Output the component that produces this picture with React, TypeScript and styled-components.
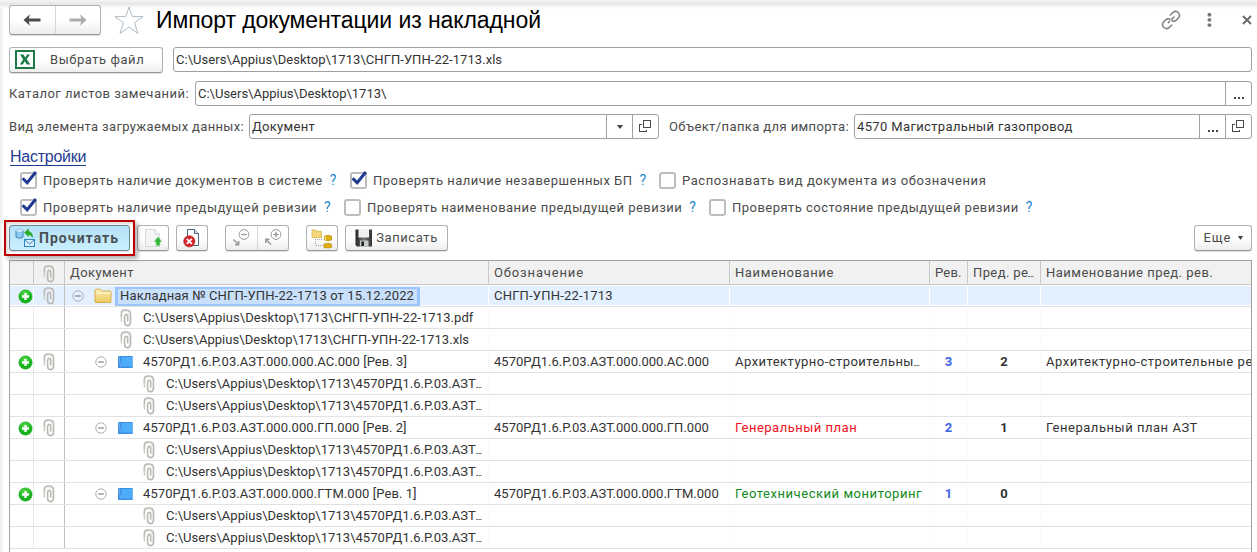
import React from 'react';
import styled, { createGlobalStyle, css } from 'styled-components';

const GlobalStyle = createGlobalStyle`
  *, *::before, *::after { box-sizing: border-box; }
  body { margin: 0; overflow: hidden; background: #fff; }
  button { font: inherit; color: inherit; }
`;

const Page = styled.div`
  position: relative;
  display: flex;
  flex-direction: column;
  width: 1257px;
  height: 552px;
  padding: 5px 5px 0 9px;
  overflow: hidden;
  background:
    linear-gradient(to bottom, #f6f6f6 0, #e6e6e6 4px, #f4f4f4 6px, rgba(255, 255, 255, 0) 9px) top / 100% 9px no-repeat,
    linear-gradient(to right, #ececec 0, #f7f7f7 2px, #fff 5px);
  font: 13px/16px Roboto, 'Liberation Sans', sans-serif;
  color: #4b4b4b;
`;

const Text = styled.span<{ $ls?: number; $color?: string }>`
  white-space: pre;
  letter-spacing: ${p => p.$ls ?? 0}px;
  color: ${p => p.$color ?? 'inherit'};
`;

const buttonFace = css`
  border: 1px solid #b0b0b0;
  border-bottom-color: #989898;
  border-radius: 3px;
  background: linear-gradient(#fff 0, #fff 50%, #ededed 100%);
  box-shadow: 0 1px 0 rgba(0, 0, 0, 0.12);
`;

const TitleBar = styled.header`
  display: flex;
  align-items: center;
  height: 30px;
`;
const NavGroup = styled.div`
  ${buttonFace}
  display: flex;
  width: 92px;
  height: 30px;
`;
const NavButton = styled.button`
  display: flex;
  flex: 1;
  align-items: center;
  justify-content: center;
  padding: 0;
  border: 0;
  background: none;
  & + & { border-left: 1px solid #d5d5d5; }
`;
const StarSlot = styled.div`
  display: flex;
  width: 30px;
  margin: 0 12px 0 13px;
`;
const Title = styled.h1`
  flex: 1;
  margin: 0;
  font: 23px/30px 'Liberation Sans', Arial, sans-serif;
  letter-spacing: -0.09px;
  color: #000;
`;
const WindowActions = styled.div`
  display: flex;
  align-items: center;
  width: 91px;
  height: 28px;
`;

const FieldRow = styled.div<{ $top: number }>`
  display: flex;
  align-items: center;
  height: 25px;
  margin-top: ${p => p.$top}px;
`;
const Label = styled.label<{ $w: number; $ls: number }>`
  width: ${p => p.$w}px;
  white-space: nowrap;
  letter-spacing: ${p => p.$ls}px;
`;
const Field = styled.div<{ $w: number }>`
  display: flex;
  width: ${p => p.$w}px;
  height: 25px;
  border: 1px solid #a0a0a0;
  border-radius: 3px;
  background: #fff;
  color: #333;
`;
const FieldValue = styled.div`
  flex: 1;
  padding: 3px 0 0 2px;
  line-height: 17px;
`;
const FieldButton = styled.button`
  display: flex;
  align-items: center;
  justify-content: center;
  width: 26px;
  padding: 0;
  border: 0;
  border-left: 1px solid #a0a0a0;
  background: none;
`;
const FileButton = styled.button`
  ${buttonFace}
  display: flex;
  align-items: center;
  gap: 15px;
  width: 154px;
  height: 26px;
  margin-right: 10px;
  padding: 0 0 0 5px;
`;

const SettingsLink = styled.a`
  align-self: flex-start;
  height: 17px;
  margin: 10px 0 0 1px;
  border-bottom: 1px solid #1f3a93;
  font: 16px/16px 'Liberation Sans', Arial, sans-serif;
  letter-spacing: -0.25px;
  color: #1f3a93;
`;
const CheckRow = styled.div<{ $top: number }>`
  display: flex;
  align-items: center;
  height: 17px;
  margin: ${p => p.$top}px 0 0 11px;
`;
const CheckItem = styled.div<{ $w: number }>`
  display: flex;
  align-items: center;
  width: ${p => p.$w}px;
`;
const Box = styled.span`
  flex: none;
  width: 17px;
  height: 17px;
  margin-right: 6px;
  border: 2px solid #bdbdbd;
  border-radius: 3px;
  background: #fff;
  svg { display: block; margin: -3px 0 0 -1px; overflow: visible; }
`;
const Hint = styled.span`
  margin-left: 7px;
  font-size: 14px;
  line-height: 15px;
  color: #1b86cc;
`;

const Toolbar = styled.div`
  display: flex;
  height: 26px;
  margin-top: 9px;
`;
const ToolButton = styled.button<{ $w: number; $gap?: number }>`
  ${buttonFace}
  display: flex;
  align-items: center;
  justify-content: center;
  width: ${p => p.$w}px;
  height: 26px;
  margin-left: ${p => p.$gap ?? 0}px;
  padding: 0;
`;
const ReadButton = styled(ToolButton)`
  position: relative;
  justify-content: flex-start;
  padding-left: 5px;
  gap: 3px;
  border-color: #6c8796;
  background: linear-gradient(#b4e2f6, #c9effd);
  font: bold 14px/16px Roboto, sans-serif;
  color: #4a5155;
  &::after {
    content: '';
    position: absolute;
    inset: -6px;
    border: 2px solid #c00000;
    box-shadow: 3px 3px 4px rgba(0, 0, 0, 0.3), inset 2px 2px 3px rgba(0, 0, 0, 0.15);
  }
`;
const ToolPair = styled.div`
  ${buttonFace}
  display: flex;
  width: 64px;
  height: 26px;
  margin-left: 17px;
`;
const Spacer = styled.div`
  flex: 1;
`;

const Table = styled.div`
  flex: none;
  width: 1243px;
  height: 300px;
  margin-top: 9px;
  border: 1px solid #a0a0a0;
`;
const columns = css`
  display: grid;
  grid-template-columns: 24px 31px 424px 241px 200px 38px 73px 210px;
`;
const HeaderRow = styled.div`
  ${columns}
  height: 24px;
  border-bottom: 1px solid #c6c6c6;
  background: #f1f1f1;
`;
const HeaderCell = styled.div<{ $ls?: number }>`
  padding: 3px 0 0 5px;
  border-right: 1px solid #c9c9c9;
  overflow: hidden;
  white-space: nowrap;
  line-height: 17px;
  letter-spacing: ${p => p.$ls ?? 0.4}px;
  &:last-child { border-right: 0; }
`;
const HeaderIcon = styled(HeaderCell)`
  display: flex;
  justify-content: center;
  padding: 4px 0 0;
`;
const BodyRow = styled.div<{ $selected?: boolean }>`
  ${columns}
  height: 22px;
  border-bottom: 1px solid #e2e2e2;
  color: #333;
  ${p => p.$selected && css`
    box-shadow: inset 0 1px #fff, inset 0 -1px #fff;
    background: #e3f0ff;
  `}
`;
const Cell = styled.div<{ $line?: string; $center?: boolean; $bold?: boolean }>`
  display: flex;
  align-items: center;
  justify-content: ${p => (p.$center ? 'center' : 'flex-start')};
  padding-top: 1px;
  padding-left: ${p => (p.$center ? 0 : 5)}px;
  border-right: 1px solid ${p => p.$line ?? '#fbfbfb'};
  overflow: hidden;
  font-weight: ${p => (p.$bold ? 700 : 400)};
  &:last-child { border-right: 0; }
`;
const TreeCell = styled(Cell)<{ $indent: number }>`
  padding-left: ${p => p.$indent}px;
`;
const Glyph = styled.span<{ $w: number; $gap?: number }>`
  display: flex;
  flex: none;
  justify-content: center;
  width: ${p => p.$w}px;
  margin-right: ${p => p.$gap ?? 0}px;
`;
const Selection = styled.span`
  display: flex;
  align-items: center;
  width: 305px;
  height: 19px;
  padding-left: 2px;
  border: 2px solid #9cc6fb;
  border-left-width: 3px;
  border-right-width: 3px;
  background: #c9e0fc;
`;

const Arrow = ({ flip, color }: { flip?: boolean; color: string }) => (
  <svg width="18" height="12" viewBox="0 0 18 12">
    <path d="M0.5 6 7 0.3 5.8 4.6H17.5V7.4H5.8L7 11.7Z" fill={color} transform={flip ? 'matrix(-1 0 0 1 18 0)' : undefined} />
  </svg>
);
const Star = () => (
  <svg width="30" height="30" viewBox="0 0 30 30">
    <path d="M15 2 18.3 11.6H29L20.5 17.8 24 28.5 15 22 6 28.5 9.5 17.8 1 11.6H11.7Z" fill="#fff" stroke="#aebac4" strokeLinejoin="miter" />
  </svg>
);
const LinkIcon = () => (
  <svg width="20" height="20" viewBox="0 0 20 20" fill="none" stroke="#858585" strokeWidth="1.6" strokeLinecap="round">
    <path d="M9.3 5 12 2.3Q14.6 .2 17.2 2.5 19.7 5.2 17.6 7.8L15 10.4Q13.4 11.6 11.5 10.9M10.7 15 8 17.7Q5.4 19.8 2.8 17.5.3 14.8 2.4 12.2L5 9.6Q6.6 8.4 8.5 9.1M7.2 12.8 8.6 11.4M10.4 9.6 13 7" />
  </svg>
);
const Dots = () => (
  <svg width="5" height="14" viewBox="0 0 5 14" fill="#777">
    <rect x=".6" y="0" width="3.6" height="3.4" rx="1" /><rect x=".6" y="5.2" width="3.6" height="3.4" rx="1" /><rect x=".6" y="10.4" width="3.6" height="3.4" rx="1" />
  </svg>
);
const Cross = () => (
  <svg width="10" height="10" viewBox="0 0 10 10"><path d="M1 1 9 9M9 1 1 9" stroke="#6c6c6c" strokeWidth="1.9" /></svg>
);
const Excel = () => (
  <svg width="20" height="19" viewBox="0 0 20 19">
    <rect x="1" y="1" width="18" height="17" fill="#fff" stroke="#1d7a47" strokeWidth="2" />
    <path d="M5 4.5H8.4L10.2 7.6 12.1 4.5H15L11.7 9.3 15.3 14.5H11.8L9.8 11.2 7.8 14.5H4.7L8.2 9.4Z" fill="#1d7a47" />
  </svg>
);
const Caret = ({ w = 6 }: { w?: number }) => (
  <svg width={w} height="4" viewBox="0 0 6 4" preserveAspectRatio="none"><path d="M0 0H6L3.5 3.5H2.5Z" fill="#444" /></svg>
);
const OpenIcon = () => (
  <svg width="13" height="13" viewBox="0 0 13 13" fill="none" stroke="#4b4b4b" shapeRendering="crispEdges">
    <path d="M4.5 .5H11.5V7.5H4.5ZM2.5 4.5H.5V11.5H7.5V9.5" />
  </svg>
);
const Ellipsis = () => (
  <svg width="12" height="3" viewBox="0 0 12 3" fill="#444"><path d="M1 0H3V2H1ZM5 0H7V2H5ZM9 0H11V2H9Z" /></svg>
);
const LowGlyph = styled.span`
  display: flex;
  padding-top: 9px;
`;
const Tick = () => (
  <svg width="17" height="16" viewBox="0 0 17 16"><path d="M1.6 7.2 6.2 11.8 14.8 1" fill="none" stroke="#1f3a93" strokeWidth="3" /></svg>
);

const ReadIcon = () => (
  <svg width="21" height="20" viewBox="0 0 21 20">
    <path d="M1 2.5Q4.5 0 8 2.5V9Q4.5 11.5 1 9Z" fill="#8bcaf2" stroke="#3b87bd" /><ellipse cx="4.5" cy="2.5" rx="3.2" ry="1.3" fill="#d4effc" />
    <path d="M9.5 4.5 13.5 1V3.2Q17.5 4 17.5 9.4 16 6.5 13.5 6.3V8.4Z" fill="#27b327" stroke="#169116" strokeWidth=".5" />
    <rect x="9.5" y="11.5" width="10" height="7" fill="#d6f0ff" stroke="#2f86c4" /><path d="M9.5 11.5 14.5 16 19.5 11.5" fill="none" stroke="#2f86c4" />
  </svg>
);
const UploadIcon = () => (
  <svg width="20" height="20" viewBox="0 0 20 20">
    <path d="M2.5 1.5H12L16.5 6V18.5H2.5Z" fill="#f3f4f4" stroke="#d5d8d8" /><path d="M12 1.5V6H16.5" fill="#fff" stroke="#d0d3d3" />
    <path d="M15 9 18.8 13.7H16.8V17.5H13.2V13.7H11.2Z" fill="#2fb52f" stroke="#79cf79" strokeWidth=".6" />
  </svg>
);
const DeleteIcon = () => (
  <svg width="18" height="20" viewBox="0 0 18 20">
    <path d="M4.5 1.5H11.5L15.5 5.5V17.5H4.5Z" fill="#fff" stroke="#4b6480" /><path d="M11.5 1.5V5.5H15.5" fill="#dce5ee" stroke="#4b6480" />
    <circle cx="6.3" cy="13.3" r="5.6" fill="#d9252a" stroke="#a91419" strokeWidth=".6" /><path d="M3.8 10.8 8.8 15.8M8.8 10.8 3.8 15.8" stroke="#fff" strokeWidth="1.8" />
  </svg>
);
const ZoomIcon = ({ plus }: { plus?: boolean }) => (
  <svg width="20" height="20" viewBox="0 0 20 20" fill="none" stroke="#999">
    <circle cx="13" cy="6.5" r="4.9" /><path d={plus ? 'M10.3 6.5H15.7M13 3.8V9.2' : 'M10.3 6.5H15.7'} strokeWidth="1.3" />
    <path d={plus ? 'M8 16.5 3 11.5M2.8 15V11.3H6.5' : 'M2.5 11.5 7.5 16.5M7.7 13V16.7H4'} strokeWidth="1.5" />
  </svg>
);
const TreeIcon = () => (
  <svg width="22" height="21" viewBox="0 0 22 21">
    <path d="M1 2H5L6 3.3H10.5V9.5H1Z" fill="#f2d77b" stroke="#d9b74f" strokeWidth=".8" />
    <path d="M4.5 11V17.5M6 11.5H12M5 17.5H12" stroke="#a2a2a2" strokeDasharray="1 1" />
    <path d="M13.5 8Q17 6.5 20.5 8V12Q17 13.5 13.5 12ZM13 16Q17 14.5 20.5 16V19.5Q17 20.5 13 19.5Z" fill="#dfae12" stroke="#c28f07" strokeWidth=".7" /><path d="M14.5 8.8V12" stroke="#fbe685" />
  </svg>
);
const Floppy = () => (
  <svg width="18" height="18" viewBox="0 0 18 18">
    <defs><linearGradient id="fl" x1="0" x2="1"><stop stopColor="#222" /><stop offset=".5" stopColor="#777" /><stop offset="1" stopColor="#333" /></linearGradient></defs>
    <path d="M.5 .5H17V17.5H2L.5 16Z" fill="url(#fl)" /><path d="M3.5 0H14V8.5H3.5Z" fill="#eef0f1" /><path d="M5 11.5H13.5V17.5H5Z" fill="#c9cccc" /><path d="M6.3 12.5H9V17H6.3Z" fill="#222" />
  </svg>
);
const Clip = () => (
  <svg width="12" height="18" viewBox="0 0 12 18" fill="none" strokeLinecap="round">
    <path d="M1.4 8V4Q1.5 1 5 1H6.5Q10.4 1.2 10.5 5V13.2Q10.3 16.7 7.4 16.6 4.7 16.5 4.6 13.5V7.5Q4.9 5.3 6.3 5.4 7.7 5.5 7.7 7.5V12" stroke="#b9b7b1" strokeWidth="1.6" />
    <path d="M1.4 7V12" stroke="#ccc9c3" strokeWidth="1.4" /><path d="M3 3.5Q3.5 2.3 5 2.3H6.3Q9 2.5 9.1 5V13" stroke="#e5e3df" strokeWidth=".9" />
  </svg>
);
const Plus = () => (
  <svg width="15" height="15" viewBox="0 0 15 15">
    <defs><radialGradient id="gp" cx=".45" cy=".3"><stop stopColor="#58dc4b" /><stop offset="1" stopColor="#17b01f" /></radialGradient></defs>
    <circle cx="7.5" cy="7.5" r="6.7" fill="url(#gp)" stroke="#2bb52f" strokeWidth=".5" /><path d="M7.5 4V11M4 7.5H11" stroke="#fff" strokeWidth="2.3" />
  </svg>
);
const Minus = () => (
  <svg width="12" height="12" viewBox="0 0 12 12" fill="none"><circle cx="6" cy="6" r="5.2" stroke="#b0b0b0" /><path d="M3.2 6H8.8" stroke="#777" strokeWidth="1.1" /></svg>
);
const Folder = () => (
  <svg width="19" height="16" viewBox="0 0 19 16">
    <defs><linearGradient id="fo" x2="0" y2="1"><stop stopColor="#fbeeb2" /><stop offset="1" stopColor="#e9c961" /></linearGradient></defs>
    <path d="M1 13.5V2.4Q1 1.2 2.2 1.2H6.6L8.2 3H16Q17 3 17 4.2V13.5Q17 14.5 16 14.5H2Q1 14.5 1 13.5Z" fill="url(#fo)" stroke="#d5b04c" /><path d="M2 5H16.5" stroke="#fff7d5" />
  </svg>
);
const Book = () => (
  <svg width="15" height="12" viewBox="0 0 15 12"><rect width="15" height="12" rx=".5" fill="#3c8fe4" /><rect x="3.5" y="1" width="10.5" height="9.5" fill="#4dadfa" /><path d="M1 .5 2.6 11M14.5 0V12" stroke="#8fc7fa" strokeWidth=".7" /></svg>
);

type Doc = { title: string; code: string; name: string; nameColor?: string; nameLs: number; rev: string; prev: string; prevName: string };
const docs: Doc[] = [
  { title: '4570РД1.6.Р.03.АЗТ.000.000.АС.000 [Рев. 3]', code: '4570РД1.6.Р.03.АЗТ.000.000.АС.000', name: 'Архитектурно-строительны…', nameLs: 0.47, rev: '3', prev: '2', prevName: 'Архитектурно-строительные ре' },
  { title: '4570РД1.6.Р.03.АЗТ.000.000.ГП.000 [Рев. 2]', code: '4570РД1.6.Р.03.АЗТ.000.000.ГП.000', name: 'Генеральный план', nameColor: '#f0101c', nameLs: 0.5, rev: '2', prev: '1', prevName: 'Генеральный план АЗТ' },
  { title: '4570РД1.6.Р.03.АЗТ.000.000.ГТМ.000 [Рев. 1]', code: '4570РД1.6.Р.03.АЗТ.000.000.ГТМ.000', name: 'Геотехнический мониторинг', nameColor: '#118a1c', nameLs: 0.54, rev: '1', prev: '0', prevName: '' },
];

const Dash = styled.i`
  display: inline-block;
  width: 6px;
  height: 1px;
  background: repeating-linear-gradient(to right, #777 0 2px, #bbb 2px 3px);
`;
const Clipped = ({ text, ls, color }: { text: string; ls: number; color?: string }) => (
  <Text $ls={ls} $color={color}>{text.replace('…', '')}{text.endsWith('…') && <Dash />}</Text>
);

const EmptyCells = () => <><Cell /><Cell /><Cell /><Cell /><Cell /></>;

const FileRow = ({ text, indent, ls }: { text: string; indent: number; ls: number }) => (
  <BodyRow>
    <Cell $line="#e8e8e8" /><Cell $line="#c0c0c0" />
    <TreeCell $indent={indent}><Glyph $w={12} $gap={11}><Clip /></Glyph><Clipped text={text} ls={ls} /></TreeCell>
    <EmptyCells />
  </BodyRow>
);

const DocRows = ({ doc }: { doc: Doc }) => (
  <>
    <BodyRow>
      <Cell $line="#e8e8e8" $center><Glyph $w={15} $gap={-7}><Plus /></Glyph></Cell>
      <Cell $line="#c0c0c0" $center><Clip /></Cell>
      <TreeCell $indent={30}>
        <Glyph $w={12} $gap={11}><Minus /></Glyph><Glyph $w={15} $gap={10}><Book /></Glyph><Text $ls={0.07}>{doc.title}</Text>
      </TreeCell>
      <Cell><Text $ls={0.02}>{doc.code}</Text></Cell>
      <Cell><Clipped text={doc.name} ls={doc.nameLs} color={doc.nameColor} /></Cell>
      <Cell $center $bold><Text $color="#3c63e6">{doc.rev}</Text></Cell>
      <Cell $center $bold><Text>{doc.prev}</Text></Cell>
      <Cell><Text $ls={0.53}>{doc.prevName}</Text></Cell>
    </BodyRow>
    {[0, 1].map(i => <FileRow key={i} indent={78} ls={0.04} text={'C:\\Users\\Appius\\Desktop\\1713\\4570РД1.6.Р.03.АЗТ…'} />)}
  </>
);

const Check = ({ w, label, ls = 0.49, on, hint }: { w: number; label: string; ls?: number; on?: boolean; hint?: boolean }) => (
  <CheckItem $w={w}><Box>{on && <Tick />}</Box><Text $ls={ls}>{label}</Text>{hint && <Hint>?</Hint>}</CheckItem>
);

export default function App() {
  return (
    <Page>
      <GlobalStyle />
      <TitleBar>
        <NavGroup><NavButton><Arrow color="#4b4b4b" /></NavButton><NavButton><Arrow flip color="#ababab" /></NavButton></NavGroup>
        <StarSlot><Star /></StarSlot>
        <Title>Импорт документации из накладной</Title>
        <WindowActions>
          <Glyph $w={20} $gap={26}><LinkIcon /></Glyph><Glyph $w={5} $gap={30}><Dots /></Glyph><Glyph $w={10}><Cross /></Glyph>
        </WindowActions>
      </TitleBar>

      <FieldRow $top={12}>
        <FileButton><Excel /><Text $ls={0.55}>Выбрать файл</Text></FileButton>
        <Field $w={1079}><FieldValue><Text $ls={0.05}>{'C:\\Users\\Appius\\Desktop\\1713\\СНГП-УПН-22-1713.xls'}</Text></FieldValue></Field>
      </FieldRow>
      <FieldRow $top={9}>
        <Label $w={186} $ls={0.48}>Каталог листов замечаний:</Label>
        <Field $w={1057}>
          <FieldValue><Text>{'C:\\Users\\Appius\\Desktop\\1713\\'}</Text></FieldValue>
          <FieldButton><LowGlyph><Ellipsis /></LowGlyph></FieldButton>
        </Field>
      </FieldRow>
      <FieldRow $top={8}>
        <Label $w={240} $ls={0.35}>Вид элемента загружаемых данных:</Label>
        <Field $w={410}>
          <FieldValue><Text $ls={0.3}>Документ</Text></FieldValue>
          <FieldButton><Caret /></FieldButton><FieldButton><OpenIcon /></FieldButton>
        </Field>
        <Spacer />
        <Label $w={185} $ls={0.4}>Объект/папка для импорта:</Label>
        <Field $w={398}>
          <FieldValue><Text $ls={0.36}>4570 Магистральный газопровод</Text></FieldValue>
          <FieldButton><LowGlyph><Ellipsis /></LowGlyph></FieldButton><FieldButton><OpenIcon /></FieldButton>
        </Field>
      </FieldRow>

      <SettingsLink>Настройки</SettingsLink>
      <CheckRow $top={6}>
        <Check w={330} on hint label="Проверять наличие документов в системе" />
        <Check w={309} on hint label="Проверять наличие незавершенных БП" />
        <Check w={350} ls={0.58} label="Распознавать вид документа из обозначения" />
      </CheckRow>
      <CheckRow $top={10}>
        <Check w={324} on hint label="Проверять наличие предыдущей ревизии" />
        <Check w={365} hint label="Проверять наименование предыдущей ревизии" />
        <Check w={350} ls={0.47} hint label="Проверять состояние предыдущей ревизии" />
      </CheckRow>

      <Toolbar>
        <ReadButton $w={121}><ReadIcon /><Text $ls={1.05}>Прочитать</Text></ReadButton>
        <ToolButton $w={32} $gap={7}><UploadIcon /></ToolButton>
        <ToolButton $w={32} $gap={7}><DeleteIcon /></ToolButton>
        <ToolPair><NavButton><ZoomIcon /></NavButton><NavButton><ZoomIcon plus /></NavButton></ToolPair>
        <ToolButton $w={32} $gap={17}><TreeIcon /></ToolButton>
        <ToolButton $w={103} $gap={7}><Glyph $w={18} $gap={3}><Floppy /></Glyph><Text $ls={0.6}>Записать</Text></ToolButton>
        <Spacer />
        <ToolButton $w={58}><Glyph $w={28} $gap={6}><Text $ls={0.9}>Еще</Text></Glyph><Caret w={5} /></ToolButton>
      </Toolbar>

      <Table>
        <HeaderRow>
          <HeaderCell /><HeaderIcon><Clip /></HeaderIcon>
          <HeaderCell $ls={0.4}>Документ</HeaderCell><HeaderCell $ls={0.85}>Обозначение</HeaderCell><HeaderCell $ls={0.6}>Наименование</HeaderCell>
          <HeaderCell $ls={0.2}>Рев.</HeaderCell><HeaderCell>Пред. ре<Dash /></HeaderCell><HeaderCell $ls={0.48}>Наименование пред. рев.</HeaderCell>
        </HeaderRow>
        <BodyRow $selected>
          <Cell $line="#fff" $center><Glyph $w={15} $gap={-7}><Plus /></Glyph></Cell>
          <Cell $line="#c0c0c0" $center><Clip /></Cell>
          <TreeCell $indent={7} $line="#fff">
            <Glyph $w={12} $gap={10}><Minus /></Glyph><Glyph $w={19} $gap={2}><Folder /></Glyph>
            <Selection><Text $ls={0.14}>Накладная № СНГП-УПН-22-1713 от 15.12.2022</Text></Selection>
          </TreeCell>
          <Cell $line="#fff"><Text $ls={0.2}>СНГП-УПН-22-1713</Text></Cell>
          <Cell $line="#fff" /><Cell $line="#fff" /><Cell $line="#fff" /><Cell />
        </BodyRow>
        <FileRow indent={55} ls={0.08} text={'C:\\Users\\Appius\\Desktop\\1713\\СНГП-УПН-22-1713.pdf'} />
        <FileRow indent={55} ls={0.05} text={'C:\\Users\\Appius\\Desktop\\1713\\СНГП-УПН-22-1713.xls'} />
        {docs.map(d => <DocRows key={d.code} doc={d} />)}
      </Table>
    </Page>
  );
}
